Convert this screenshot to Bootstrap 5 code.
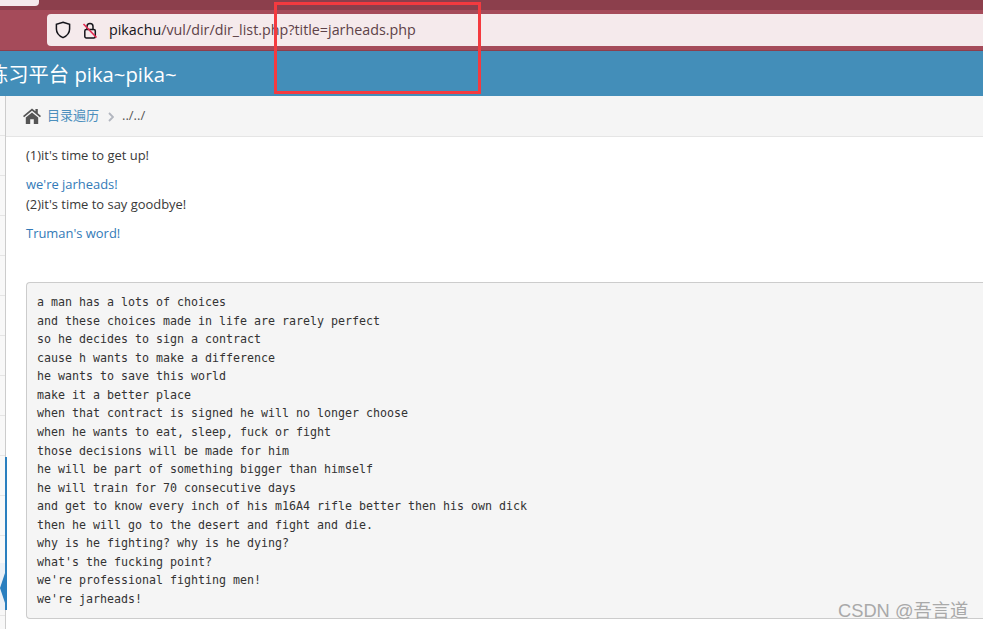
<!DOCTYPE html>
<html lang="zh">
<head>
<meta charset="utf-8">
<title>pikachu</title>
<link rel="stylesheet" href="https://cdn.jsdelivr.net/npm/bootstrap@5.3.0/dist/css/bootstrap.min.css">
<style>
html,body{height:629px;overflow:hidden;margin:0}
body{font-family:"Open Sans","Noto Sans CJK SC",sans-serif;font-size:13px;color:#393939;background:#fff}
.shot-tabs{height:10px;background:#8c3f4c;position:relative}
.shot-tabchip{position:absolute;left:0;top:0;width:39px;height:6px;background:#f5eaec;border-radius:0 0 4px 0}
.shot-tools{height:41px;background:#a54b5a;padding:4px 0 0 47px;border-bottom:1px solid #8c3f4c}
.shot-url{height:32px;background:#f5eaec;border-radius:4px 0 0 4px;padding-left:8px;gap:11px;font-family:"Open Sans","Noto Sans",sans-serif;font-size:14.3px;color:#5d4248}
.shot-url b{font-weight:400;color:#15141a}
.shot-head{height:45px;background:#438eb9;color:#fff;font-size:20.3px;line-height:47px;white-space:nowrap;overflow:hidden}
.shot-head span{display:block;margin-left:-12px}
.shot-main{height:533px}
.shot-rail{width:6px;border-right:1px solid #ccc;flex:none;background-color:#f8f8f8;background-image:repeating-linear-gradient(to bottom,#f8f8f8 0 39px,#e5e5e5 39px 40px)}
.shot-content{flex:1;min-width:0}
.shot-crumbs{height:41px;background:#f5f5f5;border-bottom:1px solid #e5e5e5;padding-left:17px;color:#555;font-size:13px}
.shot-crumbs a{color:#4c8fbd;text-decoration:none;margin-left:6px}
.shot-sep{margin:1px 8px 0 9px}
.shot-page{padding:9px 0 0 20px}
.shot-page p{margin:0;line-height:19px;font-size:12.95px}
.shot-page a{color:#337ab7;text-decoration:none;display:block;line-height:19px;margin-bottom:1px;font-size:12.95px}
.shot-gap{margin-bottom:10px!important}
.shot-pre{margin:39px 0 0;padding:10px 0 0 10px;height:337px;background:#f5f5f5;border:1px solid #ccc;border-right:0;border-radius:4px 0 0 4px;font-family:"DejaVu Sans Mono","Liberation Mono",monospace;font-size:11.63px;line-height:18.57px;color:#333;overflow:hidden}
.shot-strip{position:absolute;left:5px;top:457px;width:2px;height:153px;background:#2a7fbf}
.shot-toggle{position:absolute;left:0;top:563px;width:5px;height:47px;background:#eaf0f6}
.shot-arrow{position:absolute;left:0;top:10px;width:5px;height:30px;background:#2a7fbf;clip-path:polygon(100% 0,0 50%,100% 100%)}
.shot-mark{position:absolute;left:274px;top:2px;width:207px;height:92px;border:3px solid #f43a3f}
.shot-water{position:absolute;left:838px;top:599px;font-family:"Liberation Sans","Noto Sans CJK SC",sans-serif;font-size:18.3px;line-height:24px;color:#a9a9a9;white-space:nowrap}
</style>
</head>
<body>
<header>
<div class="shot-tabs"><div class="shot-tabchip"></div></div>
<div class="shot-tools">
<div class="shot-url d-flex align-items-center">
<svg width="16" height="18" viewBox="0 0 16 18" fill="none" stroke="#15141a" stroke-width="1.5"><path d="M8 1.2 14.6 3.4V8c0 4-2.7 6.9-6.6 8.6C4.100 14.900 1.400 12 1.400 8V3.400Z"/></svg>
<svg width="16" height="17" viewBox="0 0 16 17" fill="none"><rect x="2.800" y="7.500" width="10.500" height="8.500" rx="1.500" stroke="#15141a" stroke-width="1.500"/><path d="M5 7.500V4.500a3 3 0 0 1 6 0v3" stroke="#15141a" stroke-width="1.500"/><path d="M1.500 2 14.500 15.500" stroke="#e22850" stroke-width="1.600"/></svg>
<div class="text-nowrap"><b>pikachu</b>/vul/dir/dir_list.php?title=jarheads.php</div>
</div>
</div>
<div class="shot-head"><span>练习平台 pika~pika~</span></div>
</header>
<main class="shot-main d-flex">
<div class="shot-rail"></div>
<div class="shot-content">
<nav class="shot-crumbs d-flex align-items-center">
<svg width="18" height="16" viewBox="0 0 18 16" fill="#555"><path d="M9 .5 0 8l1.100 1.300L9 2.700l7.900 6.600L18 8l-3.200-2.700V1h-2.400v2.300Z"/><path d="M2.800 9.600 9 4.400l6.200 5.200V16h-4.400v-4.800H7.200V16H2.800Z"/></svg>
<a href="#">目录遍历</a>
<svg class="shot-sep" width="6" height="10" viewBox="0 0 6 10" fill="none" stroke="#b2b6bf" stroke-width="1.800"><path d="M1 1 5 5 1 9"/></svg>
<span>../../</span>
</nav>
<section class="shot-page">
<p class="shot-gap">(1)it's time to get up!</p>
<a href="#">we're jarheads!</a>
<p class="shot-gap">(2)it's time to say goodbye!</p>
<a href="#">Truman's word!</a>
<pre class="shot-pre">a man has a lots of choices
and these choices made in life are rarely perfect
so he decides to sign a contract
cause h wants to make a difference
he wants to save this world
make it a better place
when that contract is signed he will no longer choose
when he wants to eat, sleep, fuck or fight
those decisions will be made for him
he will be part of something bigger than himself
he will train for 70 consecutive days
and get to know every inch of his m16A4 rifle better then his own dick
then he will go to the desert and fight and die.
why is he fighting? why is he dying?
what's the fucking point?
we're professional fighting men!
we're jarheads!</pre>
</section>
</div>
</main>
<div class="shot-strip"></div>
<div class="shot-toggle"><div class="shot-arrow"></div></div>
<div class="shot-mark"></div>
<div class="shot-water">CSDN @吾言道</div>
</body>
</html>
